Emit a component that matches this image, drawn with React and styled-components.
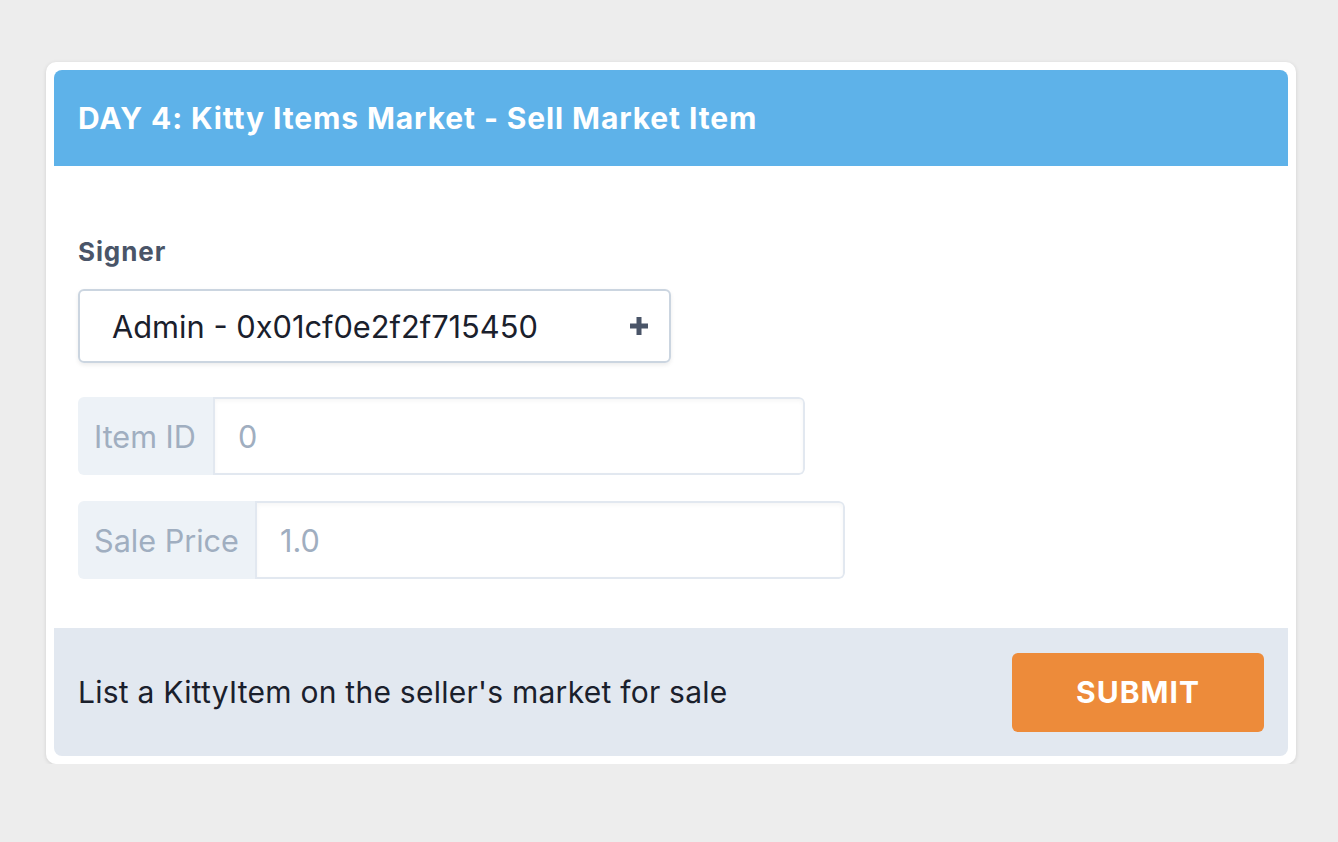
import React from "react";
import styled, { createGlobalStyle } from "styled-components";

const Global = createGlobalStyle`
  html, body { margin: 0; padding: 0; background: #ededed; }
  body { font-family: Inter, "Noto Sans", sans-serif; }
  * { box-sizing: border-box; }
`;

const Page = styled.div`
  padding: 62px 42px 0 46px;
`;

const Card = styled.div`
  width: 1250px;
  background: #ffffff;
  border-radius: 10px;
  padding: 8px;
  box-shadow: 0 1px 4px rgba(0, 0, 0, 0.12);
`;

const Header = styled.div`
  height: 96px;
  background: #5eb2e9;
  border-radius: 8px 8px 0 0;
  display: flex;
  align-items: center;
  padding: 0 24px;
`;

const Title = styled.h1`
  margin: 0;
  color: #ffffff;
  font-size: 30px;
  font-weight: 700;
  letter-spacing: 0.88px;
`;

const Body = styled.div`
  padding: 70px 24px 49px;
  display: flex;
  flex-direction: column;
  align-items: flex-start;
`;

const Label = styled.div`
  color: #4a5568;
  font-size: 26px;
  font-weight: 700;
  line-height: 32px;
  letter-spacing: 0.9px;
`;

const Select = styled.div`
  margin-top: 21px;
  width: 593px;
  height: 74px;
  border: 2px solid #cbd5e0;
  border-radius: 6px;
  box-shadow: 0 2px 4px rgba(0, 0, 0, 0.08);
  display: flex;
  align-items: center;
  justify-content: space-between;
  padding: 0 20px 0 32px;
  color: #1a202c;
  font-size: 30.8px;
`;

const InputGroup = styled.div`
  margin-top: ${(p) => p.$top}px;
  width: ${(p) => p.$width}px;
  height: 78px;
  display: flex;
  border-radius: 6px;
  overflow: hidden;
`;

const Addon = styled.div`
  width: ${(p) => p.$width}px;
  background: #edf2f7;
  color: #a0aec0;
  font-size: 30.6px;
  display: flex;
  align-items: center;
  padding-left: 16px;
  flex-shrink: 0;
`;

const Field = styled.div`
  flex: 1;
  border: 2px solid #e2e8f0;
  border-radius: 0 6px 6px 0;
  box-shadow: inset 0 2px 4px rgba(0, 0, 0, 0.04);
  color: #a0aec0;
  font-size: 30.6px;
  display: flex;
  align-items: center;
  padding-left: 23px;
`;

const Footer = styled.div`
  height: 128px;
  background: #e2e8f0;
  border-radius: 0 0 8px 8px;
  display: flex;
  align-items: center;
  justify-content: space-between;
  padding: 0 24px;
`;

const FooterText = styled.div`
  color: #1a202c;
  font-size: 30px;
  letter-spacing: 0.25px;
`;

const Button = styled.button`
  width: 252px;
  height: 79px;
  border: none;
  border-radius: 6px;
  background: #ed8b3a;
  color: #ffffff;
  font-family: inherit;
  font-size: 30px;
  font-weight: 700;
  letter-spacing: 1px;
  cursor: pointer;
`;

const Plus = () => (
  <svg width="20" height="20" viewBox="0 0 20 20">
    <path d="M7.5 1h5v6.5H19v5h-6.5V19h-5v-6.5H1v-5h6.5z" fill="#4a5568" />
  </svg>
);

export default function App() {
  return (
    <>
      <Global />
      <Page>
        <Card>
          <Header>
            <Title>DAY 4: Kitty Items Market - Sell Market Item</Title>
          </Header>
          <Body>
            <Label>Signer</Label>
            <Select>
              <span>Admin - 0x01cf0e2f2f715450</span>
              <Plus />
            </Select>
            <InputGroup $top={34} $width={727}>
              <Addon $width={135}>Item ID</Addon>
              <Field>0</Field>
            </InputGroup>
            <InputGroup $top={26} $width={767}>
              <Addon $width={177}>Sale Price</Addon>
              <Field>1.0</Field>
            </InputGroup>
          </Body>
          <Footer>
            <FooterText>List a KittyItem on the seller's market for sale</FooterText>
            <Button>SUBMIT</Button>
          </Footer>
        </Card>
      </Page>
    </>
  );
}
